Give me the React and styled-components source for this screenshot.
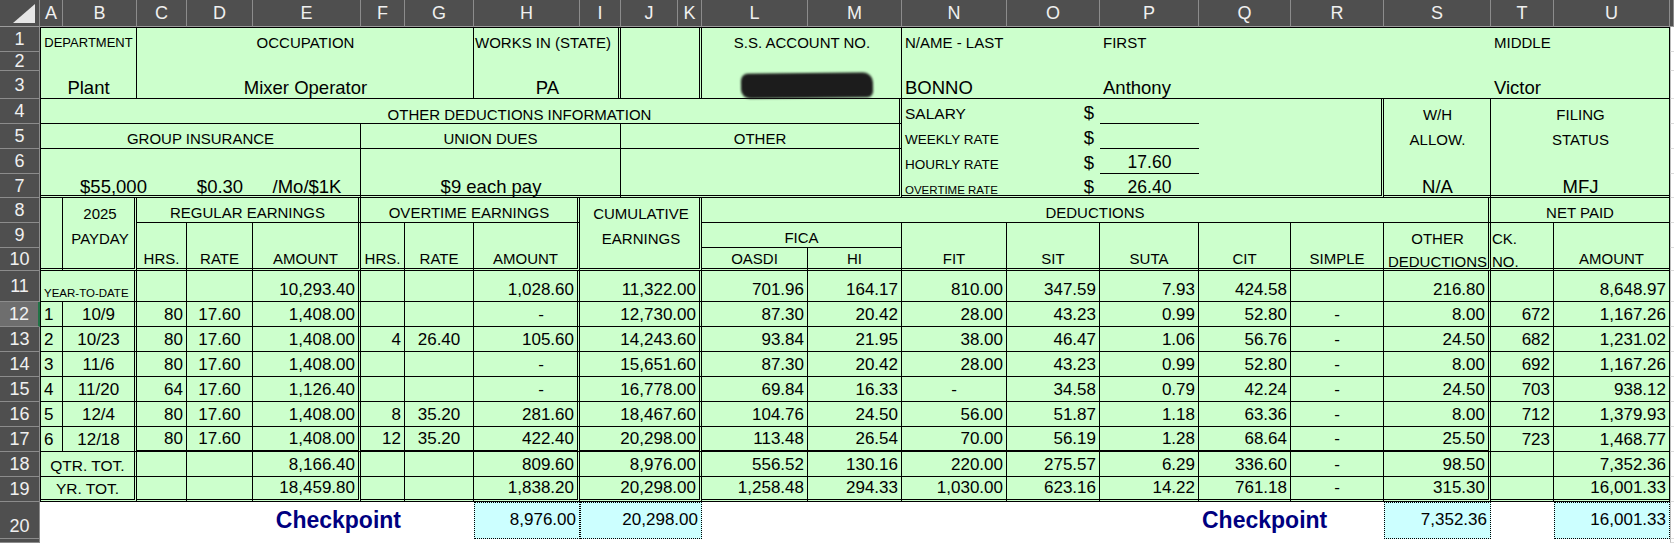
import React from 'react';
import styled, { createGlobalStyle } from 'styled-components';

const Global = createGlobalStyle`
  html, body { margin: 0; padding: 0; background: #fff; }
  body { font-family: "Liberation Sans", Arial, sans-serif; }
`;

const GREEN = '#ccffcc';
const BORDERS = {
  1: '1px solid #000',
  2: '3px double #000',
  3: '2px solid #000',
  g: '1px solid #dadada',
  d: '1px dotted #000',
};

const Sheet = styled.div`
  display: grid;
  width: 1674px;
  height: 543px;
  overflow: hidden;
  grid-template-columns: 40px 23px 74px 50px 66px 108px 44px 69px 106px 41px 57px 24px 106px 94px 105px 93px 99px 92px 93px 107px 63px 116px 1fr;
  grid-template-rows: 27px 25px 19px 28px 25px 25px 25px 24px 25px 25px 23px 31px repeat(8, 25px) 37px 1fr;
  background: #fff;
`;

const ColHead = styled.div`
  grid-column: ${p => p.$c};
  grid-row: 1;
  background: #4f4f4f;
  color: #f0f0f0;
  font-size: 18px;
  display: flex;
  align-items: center;
  justify-content: center;
  border-right: 1px solid #8c8c8c;
  border-bottom: 1px solid #9c9c9c;
  box-sizing: border-box;
`;

const Corner = styled.div`
  grid-column: 1;
  grid-row: 1;
  background: #4f4f4f;
  border-right: 1px solid #8c8c8c;
  border-bottom: 1px solid #9c9c9c;
  position: relative;
  box-sizing: border-box;
  &::after {
    content: '';
    position: absolute;
    right: 4px;
    bottom: 3px;
    border-style: solid;
    border-width: 0 0 19px 22px;
    border-color: transparent transparent #e6e6e6 transparent;
  }
`;

const RowHead = styled.div`
  grid-column: 1;
  grid-row: ${p => p.$r};
  background: ${p => (p.$sel ? '#6e6e6e' : '#4f4f4f')};
  color: #f0f0f0;
  font-size: 18px;
  display: flex;
  align-items: ${p => (p.$low ? 'flex-end' : 'center')};
  padding-bottom: ${p => (p.$low ? '3px' : '0')};
  justify-content: center;
  overflow: hidden;
  border-bottom: 1px solid #8c8c8c;
  border-right: ${p => (p.$sel ? '2px solid #217346' : '1px solid #8c8c8c')};
  box-sizing: border-box;
  line-height: 1;
`;

const Cell = styled.div`
  grid-column: ${p => p.$c} / span ${p => p.$cs};
  grid-row: ${p => p.$r} / span ${p => p.$rs};
  display: flex;
  align-items: ${p => (p.$v === 'm' ? 'center' : 'flex-end')};
  justify-content: ${p => (p.$h === 'c' ? 'center' : p.$h === 'r' ? 'flex-end' : 'flex-start')};
  padding: 0 ${p => p.$pr}px 1px ${p => p.$pl}px;
  box-sizing: border-box;
  font-size: ${p => p.$sz}px;
  font-weight: ${p => (p.$bold ? 700 : 400)};
  color: ${p => p.$color};
  background: ${p => p.$bg};
  white-space: nowrap;
  line-height: 1.15;
  min-width: 0;
  border-top: ${p => p.$bt};
  border-right: ${p => p.$br};
  border-bottom: ${p => p.$bb};
  border-left: ${p => p.$bl};
`;

const Redact = styled.div`
  width: 132px;
  height: 25px;
  background: #1c1c1c;
  border-radius: 7px 10px 6px 9px;
  filter: blur(1.2px);
  transform: rotate(-0.6deg);
`;

const LETTERS = 'ABCDEFGHIJKLMNOPQRSTU'.split('');
const colIdx = L => L.charCodeAt(0) - 63; // A -> 2

function parse(range) {
  const [a, b = a] = range.split(':');
  const m1 = a.match(/([A-Z])(\d+)/);
  const m2 = b.match(/([A-Z])(\d+)/);
  const c1 = colIdx(m1[1]);
  const c2 = colIdx(m2[1]);
  const r1 = +m1[2] + 1;
  const r2 = +m2[2] + 1;
  return { c: c1, cs: c2 - c1 + 1, r: r1, rs: r2 - r1 + 1 };
}

function borders(spec = '') {
  const out = { t: 'none', r: 'none', b: 'none', l: 'none' };
  spec.split(' ').filter(Boolean).forEach(s => {
    out[s[0]] = BORDERS[s.slice(1)];
  });
  return out;
}

function X({ at, t, o = {} }) {
  const g = parse(at);
  const bd = borders(o.b);
  return (
    <Cell
      $c={g.c} $cs={g.cs} $r={g.r} $rs={g.rs}
      $h={o.h || 'l'} $v={o.v}
      $sz={o.sz || 17}
      $bold={o.bold}
      $color={o.color || '#000'}
      $bg={o.bg || 'transparent'}
      $pl={o.pl ?? 3} $pr={o.pr ?? 3}
      $bt={bd.t} $br={bd.r} $bb={bd.b} $bl={bd.l}
    >
      {t}
    </Cell>
  );
}

const V = 18.5;
const top = [
  ['A1:U19', '', { bg: GREEN }],
  ['A1:B3', '', { b: 'l1 t1 r1 b1' }],
  ['A1:B1', 'DEPARTMENT', { sz: 13, h: 'c' }],
  ['A3:B3', 'Plant', { sz: V, h: 'c' }],
  ['C1:G3', '', { b: 't1 r1 b1' }],
  ['C1:G1', 'OCCUPATION', { sz: 15, h: 'c' }],
  ['C3:G3', 'Mixer Operator', { sz: V, h: 'c' }],
  ['H1:I3', '', { b: 't1 r2 b1' }],
  ['H1:I1', 'WORKS IN (STATE)', { sz: 15, pl: 1 }],
  ['H3:I3', 'PA', { sz: V, h: 'c' }],
  ['J1:K3', '', { b: 't1 r2 b1' }],
  ['L1:M3', '', { b: 't1 r1 b1' }],
  ['L1:M1', 'S.S. ACCOUNT NO.', { sz: 15, h: 'c' }],
  ['L3:M3', <Redact />, { h: 'c', pl: 10, pr: 0 }],
  ['N1:U3', '', { b: 't1 r1 b1' }],
  ['N1:O1', 'N/AME - LAST', { sz: 15 }],
  ['P1:S1', 'FIRST', { sz: 15 }],
  ['T1:U1', 'MIDDLE', { sz: 15 }],
  ['N3:O3', 'BONNO', { sz: V }],
  ['P3:S3', 'Anthony', { sz: V }],
  ['T3:U3', 'Victor', { sz: V }],
  ['A4:M4', '', { b: 'l1 r2 b1' }],
  ['C4:M4', 'OTHER DEDUCTIONS INFORMATION', { sz: 15, h: 'c' }],
  ['A5:E5', 'GROUP INSURANCE', { sz: 15, h: 'c', b: 'l1 r1 b1' }],
  ['F5:I5', 'UNION DUES', { sz: 15, h: 'c', b: 'r1 b1' }],
  ['J5:M5', 'OTHER', { sz: 15, h: 'c', b: 'r2 b1' }],
  ['A6:E7', '', { b: 'l1 r1 b2' }],
  ['A7:C7', '$55,000', { sz: V, h: 'c' }],
  ['D7', '$0.30', { sz: V, h: 'c' }],
  ['E7', '/Mo/$1K', { sz: V, h: 'c' }],
  ['F6:I7', '', { b: 'r1 b2' }],
  ['F7:I7', '$9 each pay', { sz: V, h: 'c' }],
  ['J6:M7', '', { b: 'r2 b2' }],
  ['N4:R7', '', { b: 'r2 b2' }],
  ['N4', 'SALARY', { sz: 15.5 }],
  ['N5', 'WEEKLY RATE', { sz: 13.5 }],
  ['N6', 'HOURLY RATE', { sz: 13.5 }],
  ['N7', 'OVERTIME RATE', { sz: 11.5 }],
  ['O4', '$', { sz: V, h: 'r', pr: 6 }],
  ['O5', '$', { sz: V, h: 'r', pr: 6 }],
  ['O6', '$', { sz: V, h: 'r', pr: 6 }],
  ['O7', '$', { sz: V, h: 'r', pr: 6 }],
  ['P4', '', { b: 'b1' }],
  ['P5', '', { b: 'b1' }],
  ['P6', '17.60', { sz: 17.5, h: 'c', b: 'b1' }],
  ['P7', '26.40', { sz: 17.5, h: 'c' }],
  ['S4:S7', '', { b: 'r1 b2' }],
  ['S4', 'W/H', { sz: 15, h: 'c' }],
  ['S5', 'ALLOW.', { sz: 15, h: 'c' }],
  ['S7', 'N/A', { sz: V, h: 'c' }],
  ['T4:U7', '', { b: 'r1 b2' }],
  ['T4:U4', 'FILING', { sz: 15, h: 'c' }],
  ['T5:U5', 'STATUS', { sz: 15, h: 'c' }],
  ['T7:U7', 'MFJ', { sz: V, h: 'c' }],
  ['A8:A10', '', { b: 'l1 r1 b2' }],
  ['B8:B10', '', { b: 'r2 b2' }],
  ['B8', '2025', { sz: 15, h: 'c' }],
  ['B9', 'PAYDAY', { sz: 15, h: 'c' }],
  ['C8:E8', 'REGULAR EARNINGS', { sz: 15, h: 'c', b: 'r2 b1' }],
  ['C9:C10', 'HRS.', { sz: 15, h: 'c', b: 'r1 b2' }],
  ['D9:D10', 'RATE', { sz: 15, h: 'c', b: 'r1 b2' }],
  ['E9:E10', 'AMOUNT', { sz: 15, h: 'c', b: 'r2 b2' }],
  ['F8:H8', 'OVERTIME EARNINGS', { sz: 15, h: 'c', b: 'r2 b1' }],
  ['F9:F10', 'HRS.', { sz: 15, h: 'c', pl: 0, pr: 0, b: 'r1 b2' }],
  ['G9:G10', 'RATE', { sz: 15, h: 'c', b: 'r1 b2' }],
  ['H9:H10', 'AMOUNT', { sz: 15, h: 'c', b: 'r2 b2' }],
  ['I8:K10', '', { b: 'r2 b2' }],
  ['I8:K8', 'CUMULATIVE', { sz: 15, h: 'c' }],
  ['I9:K9', 'EARNINGS', { sz: 15, h: 'c' }],
  ['L8:S8', 'DEDUCTIONS', { sz: 15, h: 'c', b: 'r2 b1' }],
  ['L9:M9', 'FICA', { sz: 15, h: 'c', b: 'r1 b1' }],
  ['L10', 'OASDI', { sz: 15, h: 'c', b: 'r1 b2' }],
  ['M10', 'HI', { sz: 15, h: 'c', b: 'r1 b2' }],
  ['N9:N10', 'FIT', { sz: 15, h: 'c', b: 'r1 b2' }],
  ['O9:O10', 'SIT', { sz: 15, h: 'c', b: 'r1 b2' }],
  ['P9:P10', 'SUTA', { sz: 15, h: 'c', b: 'r1 b2' }],
  ['Q9:Q10', 'CIT', { sz: 15, h: 'c', b: 'r1 b2' }],
  ['R9:R10', 'SIMPLE', { sz: 15, h: 'c', b: 'r1 b2' }],
  ['S9:S10', '', { b: 'r2 b2' }],
  ['S9', 'OTHER', { sz: 15, h: 'c' }],
  ['S10', 'DEDUCTIONS', { sz: 15, h: 'c', pl: 0, pr: 0 }],
  ['T8:U8', 'NET PAID', { sz: 15, h: 'c', b: 'r1 b1' }],
  ['T9:T10', '', { b: 'r1 b2' }],
  ['T9', 'CK.', { sz: 15, pl: 1 }],
  ['T10', 'NO.', { sz: 15, pl: 1 }],
  ['U9:U10', 'AMOUNT', { sz: 15, h: 'c', b: 'r1 b2' }],
];

const DCOLS = [
  ['C', 'r', 1], ['D', 'c', 1], ['E', 'r', 2], ['F', 'r', 1], ['G', 'c', 1], ['H', 'r', 2],
  ['I:K', 'r', 2], ['L', 'r', 1], ['M', 'r', 1], ['N', 'r', 1], ['O', 'r', 1], ['P', 'r', 1],
  ['Q', 'r', 1], ['R', 'c', 1], ['S', 'r', 2], ['T', 'r', 1], ['U', 'r', 1],
];

const ROWS = [
  [11, 'YEAR-TO-DATE', null, ['', '', '10,293.40', '', '', '1,028.60', '11,322.00', '701.96', '164.17', '810.00', '347.59', '7.93', '424.58', '', '216.80', '', '8,648.97']],
  [12, '1', '10/9', ['80', '17.60', '1,408.00', '', '', '-', '12,730.00', '87.30', '20.42', '28.00', '43.23', '0.99', '52.80', '-', '8.00', '672', '1,167.26']],
  [13, '2', '10/23', ['80', '17.60', '1,408.00', '4', '26.40', '105.60', '14,243.60', '93.84', '21.95', '38.00', '46.47', '1.06', '56.76', '-', '24.50', '682', '1,231.02']],
  [14, '3', '11/6', ['80', '17.60', '1,408.00', '', '', '-', '15,651.60', '87.30', '20.42', '28.00', '43.23', '0.99', '52.80', '-', '8.00', '692', '1,167.26']],
  [15, '4', '11/20', ['64', '17.60', '1,126.40', '', '', '-', '16,778.00', '69.84', '16.33', '-', '34.58', '0.79', '42.24', '-', '24.50', '703', '938.12']],
  [16, '5', '12/4', ['80', '17.60', '1,408.00', '8', '35.20', '281.60', '18,467.60', '104.76', '24.50', '56.00', '51.87', '1.18', '63.36', '-', '8.00', '712', '1,379.93']],
  [17, '6', '12/18', ['80', '17.60', '1,408.00', '12', '35.20', '422.40', '20,298.00', '113.48', '26.54', '70.00', '56.19', '1.28', '68.64', '-', '25.50', '723', '1,468.77']],
  [18, 'QTR. TOT.', null, ['', '', '8,166.40', '', '', '809.60', '8,976.00', '556.52', '130.16', '220.00', '275.57', '6.29', '336.60', '-', '98.50', '', '7,352.36']],
  [19, 'YR. TOT.', null, ['', '', '18,459.80', '', '', '1,838.20', '20,298.00', '1,258.48', '294.33', '1,030.00', '623.16', '14.22', '761.18', '-', '315.30', '', '16,001.33']],
];

const data = [];
ROWS.forEach(([r, a, b, vals]) => {
  const bottom = r === 19 ? 'b2' : 'b1';
  if (b === null) {
    const small = r === 11;
    data.push([`A${r}:B${r}`, a, { sz: small ? 11.5 : 15.5, h: small ? 'l' : 'c', b: `l1 r2 ${bottom}` }]);
  } else {
    data.push([`A${r}`, a, { b: `l1 r1 ${bottom}` }]);
    data.push([`B${r}`, b, { h: 'c', b: `r2 ${bottom}` }]);
  }
  DCOLS.forEach(([cols, h, rb], i) => {
    const [c1, c2 = c1] = cols.split(':');
    const thick = r === 17 && i <= 14;
    const bb = r === 19 ? 'b2' : thick ? 'b3' : 'b1';
    const v = vals[i];
    let o = { h, b: `r${rb} ${bb}` };
    if (v === '-' && cols === 'H') o = { ...o, pr: 33 };
    if (v === '-' && cols === 'N') o = { ...o, h: 'c' };
    data.push([`${c1}${r}:${c2}${r}`, v, o]);
  });
});

const bottomRows = [];
[20, 21].forEach(r => {
  LETTERS.forEach(L => bottomRows.push([`${L}${r}`, '', { b: 'r g b g' }]));
});
const blue = { bg: '#ccffff', h: 'r', b: 'td rd bd ld', v: 'm' };
const row20 = [
  ['E20:F20', 'Checkpoint', { sz: 23, bold: true, color: '#000080', h: 'r', v: 'm', pr: 4 }],
  ['H20', '8,976.00', blue],
  ['I20:K20', '20,298.00', blue],
  ['Q20:R20', 'Checkpoint', { sz: 23, bold: true, color: '#000080', v: 'm' }],
  ['S20', '7,352.36', blue],
  ['U20', '16,001.33', blue],
];

const Filler = styled.div`
  grid-column: 23;
  grid-row: ${p => p.$r};
  border-left: 1px solid #bdbdbd;
  border-bottom: 1px solid #dadada;
`;

export default function App() {
  const all = [...top, ...data, ...bottomRows, ...row20];
  return (
    <>
      <Global />
      <Sheet>
        <Corner />
        {LETTERS.map(L => (
          <ColHead key={L} $c={colIdx(L)}>{L}</ColHead>
        ))}
        <ColHead $c={23} />
        {Array.from({ length: 21 }, (_, i) => (
          <RowHead key={i} $r={i + 2} $sel={i + 1 === 12} $low={i + 1 === 20}>
            {i + 1 === 21 ? '' : i + 1}
          </RowHead>
        ))}
        {Array.from({ length: 21 }, (_, i) => (
          <Filler key={i} $r={i + 2} />
        ))}
        {all.map(([at, t, o], i) => (
          <X key={i} at={at} t={t} o={o} />
        ))}
      </Sheet>
    </>
  );
}
